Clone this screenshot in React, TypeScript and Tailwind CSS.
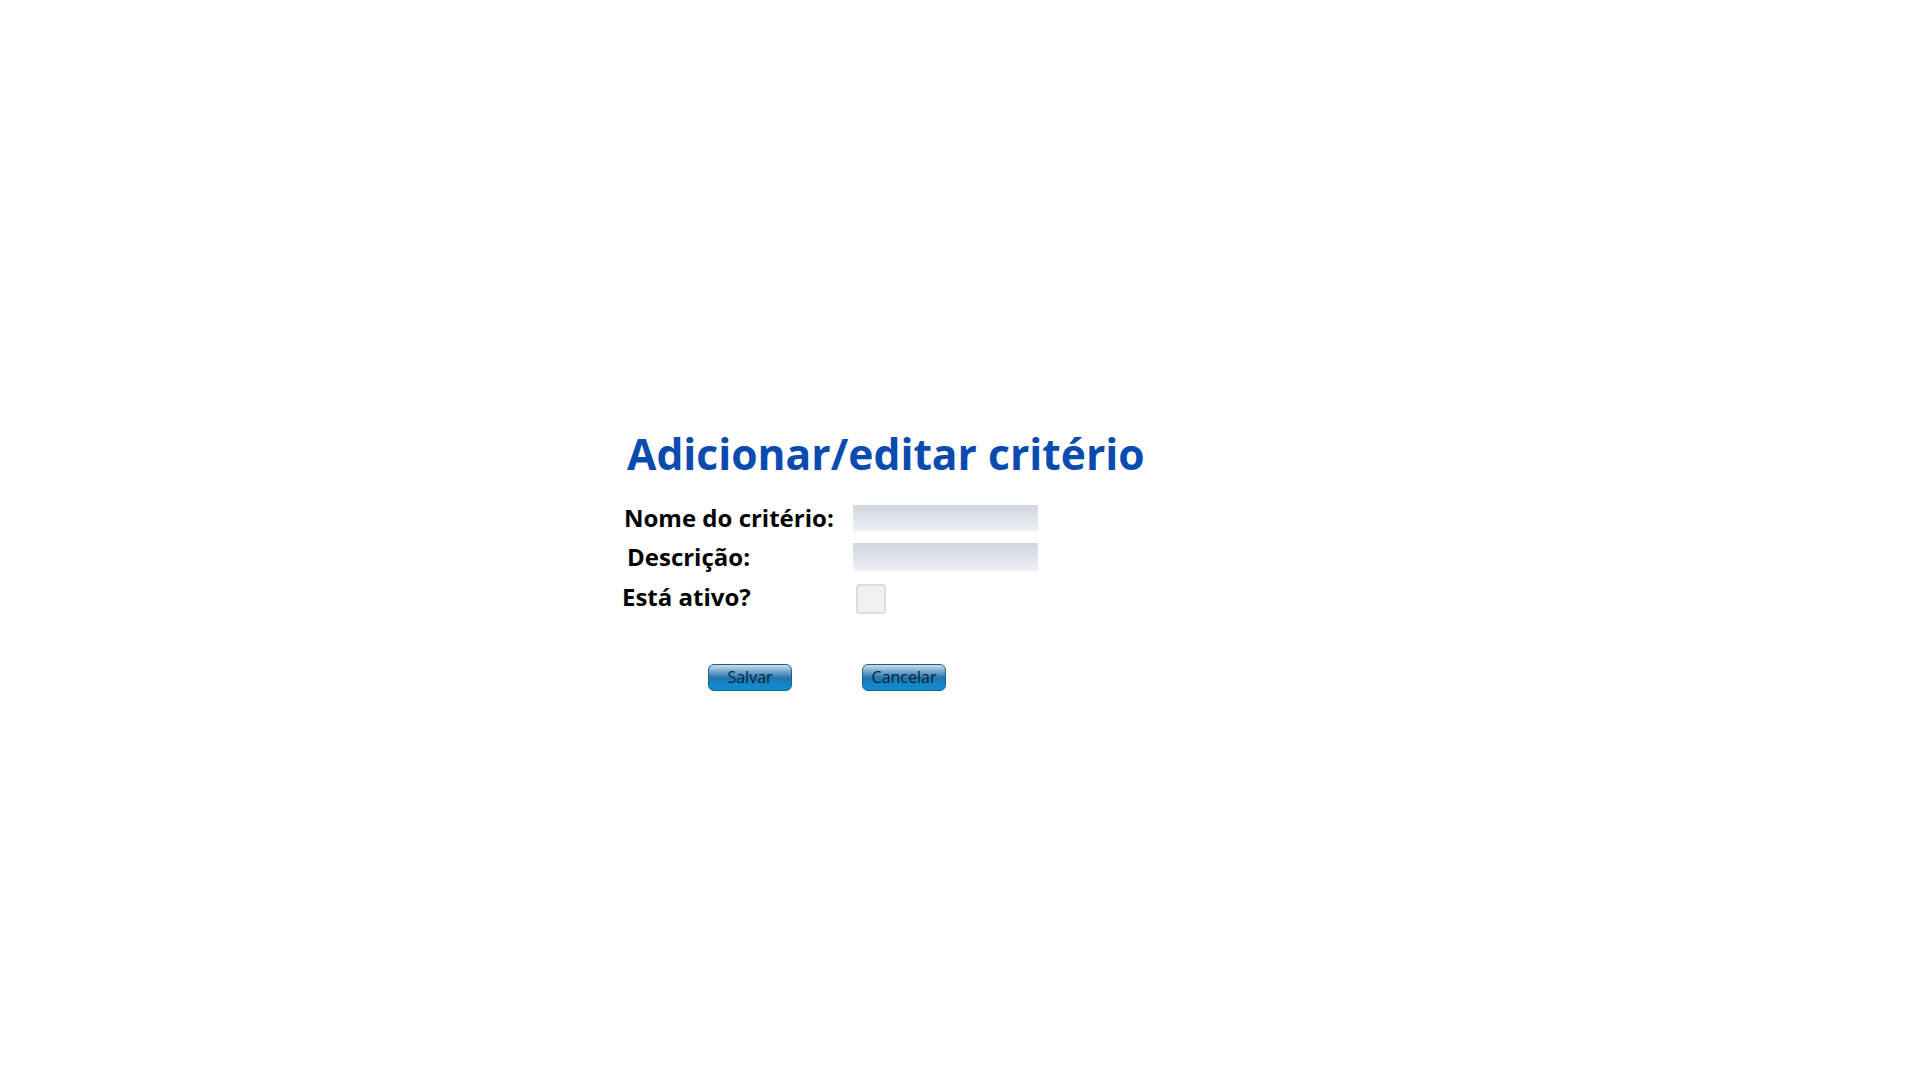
import React, { useState } from "react";

const font = { fontFamily: '"Open Sans", "Noto Sans", sans-serif' };

const App: React.FC = () => {
  const [name, setName] = useState("");
  const [desc, setDesc] = useState("");
  const [active, setActive] = useState(false);

  return (
    <div className="min-h-screen w-full bg-white" style={font}>
      <div className="pt-[432px] pl-[627px]">
        {/* Title */}
        <h1 className="text-[42.6px] font-bold leading-none text-[#0a4bb0]">
          Adicionar/editar critério
        </h1>

        {/* Form rows */}
        <div className="mt-[30px] -ml-[5px] flex flex-col">
          <div className="flex items-center h-[26px]">
            <label className="w-[231px] pl-[2px] text-[24px] font-bold leading-none text-black">
              Nome do critério:
            </label>
            <input
              type="text"
              value={name}
              onChange={(e) => setName(e.target.value)}
              className="w-[185px] h-[26px] px-1 text-sm outline-none bg-gradient-to-b from-[#d2d6e0] to-[#eef0f5]"
            />
          </div>

          <div className="mt-[12px] flex items-center h-[28px]">
            <label className="w-[231px] pl-[5px] text-[24px] font-bold leading-none text-black">
              Descrição:
            </label>
            <input
              type="text"
              value={desc}
              onChange={(e) => setDesc(e.target.value)}
              className="w-[185px] h-[28px] px-1 text-sm outline-none bg-gradient-to-b from-[#d2d6e0] to-[#eef0f5]"
            />
          </div>

          <div className="mt-[13px] flex items-center h-[30px]">
            <label className="w-[231px] -mt-[4px] text-[24px] font-bold leading-none text-black">
              Está ativo?
            </label>
            <button
              type="button"
              onClick={() => setActive(!active)}
              className="ml-[3px] w-[30px] h-[30px] rounded-[3px] border-2 border-[#dcdcdc] bg-[#f0f0f0] flex items-center justify-center text-[#333]"
            >
              {active ? "✓" : ""}
            </button>
          </div>
        </div>

        {/* Buttons */}
        <div className="mt-[50px] ml-[81px] flex gap-[70px]">
          <button
            type="button"
            className="w-[84px] h-[27px] rounded-[6px] border border-[#1d5f86] bg-gradient-to-b from-[#c9dde9] via-[#1f78b3] to-[#0590d4] text-[16px] leading-none text-[#0b2236]"
          >
            Salvar
          </button>
          <button
            type="button"
            className="w-[84px] h-[27px] rounded-[6px] border border-[#1d5f86] bg-gradient-to-b from-[#c9dde9] via-[#1f78b3] to-[#0590d4] text-[16px] leading-none text-[#0b2236]"
          >
            Cancelar
          </button>
        </div>
      </div>
    </div>
  );
};

export default App;
